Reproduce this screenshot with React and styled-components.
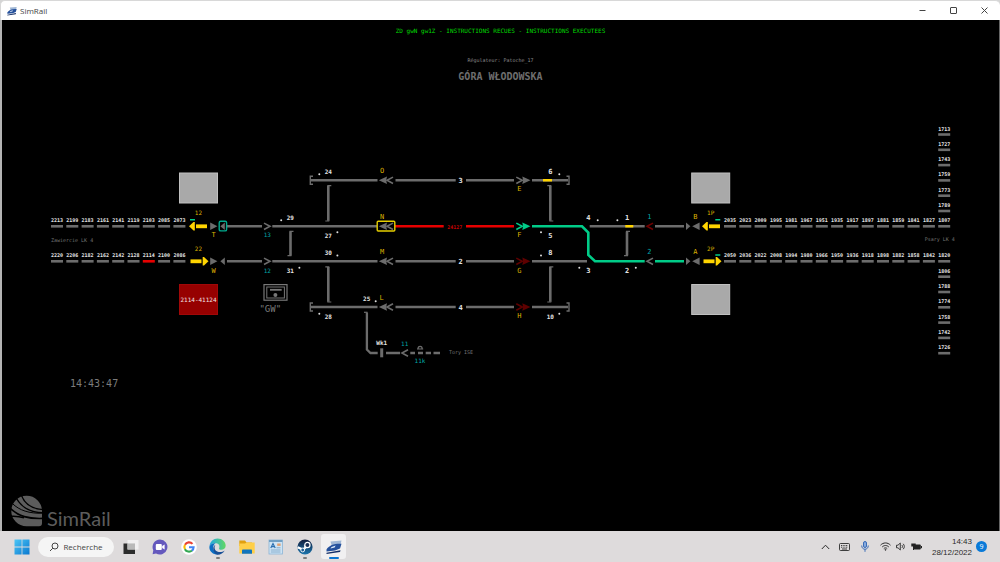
import React from 'react';
import styled, { createGlobalStyle } from 'styled-components';

const Global = createGlobalStyle`
  *{box-sizing:border-box}
  body{margin:0;background:#000;font-family:"Open Sans","Liberation Sans",sans-serif}
`;

const mono = '"DejaVu Sans Mono","Liberation Mono",monospace';
const GREY = '#6c6c6c';
const GREEN = '#00cc88';
const RED = '#e60000';
const DARK_RED = '#5e0000';
const YELLOW = '#ffd400';
const AMBER = '#dcb000';
const TEAL = '#00a8a8';

const Screen = styled.div`
  min-height: 100vh;
  display: flex;
  flex-direction: column;
  background: #d5d5d5;
`;

/* Window frame */
const TitleBar = styled.header`
  height: 20px;
  background: #fff;
  border-top: 1px solid #d8d8d8;
  border-left: 1px solid #d8d8d8;
  border-radius: 5px 5px 0 0;
  display: flex;
  align-items: center;
  padding: 0 0 0 6px;
  gap: 3px;
`;
const AppName = styled.span`
  flex: 1;
  font-size: 8px;
  line-height: 12px;
  color: #444;
`;
const BareButton = styled.button`
  border: 0;
  padding: 0;
  margin: 0;
  background: none;
  font: inherit;
  color: inherit;
  display: flex;
  align-items: center;
  justify-content: center;
`;
const WindowControls = styled.div`
  display: flex;
`;
const WindowButton = styled(BareButton)`
  width: 31px;
  height: 18px;
  color: #444;
`;

/* Dispatcher board */
const Board = styled.main`
  flex: 1;
  background: #000;
  border-left: 2px solid #b4b4b4;
  border-right: 1px solid #666;
  display: flex;
  flex-direction: column;
  font-family: ${mono};
`;
const Message = styled.p`
  margin: 5px 0 0;
  text-align: center;
  color: #00dc00;
  font-size: 6px;
  line-height: 12px;
`;
const Regulator = styled.p`
  margin: 17px 0 0;
  text-align: center;
  color: #8c8c8c;
  font-size: 5px;
  line-height: 12px;
`;
const Station = styled.h1`
  margin: 3px 0 0;
  text-align: center;
  color: #6e6e6e;
  font-size: 10px;
  line-height: 16px;
  font-weight: 700;
`;
const Diagram = styled.svg`
  display: block;
  width: 100%;
  height: auto;
  margin-top: 25px;
`;
const Clock = styled.time`
  margin: 8px 0 0 68px;
  color: #7c7c7c;
  font-size: 10px;
  line-height: 20px;
`;
const Brand = styled.div`
  margin-top: auto;
  padding: 0 0 4px 9px;
  display: flex;
  align-items: flex-end;
  gap: 4px;
  color: #5c5c5c;
`;
const BrandName = styled.span`
  font-family: Lato, sans-serif;
  font-size: 20px;
  line-height: 18px;
`;

/* Diagram parts */
const Label = styled.text`
  font-family: ${mono};
  font-size: ${p => p.$size || 6}px;
  font-weight: ${p => (p.$bold ? 700 : 400)};
  fill: ${p => p.$color || '#e4e4e4'};
  text-anchor: ${p => p.$anchor || 'middle'};
`;
const Rail = styled.path`
  fill: none;
  stroke: ${p => p.$color || GREY};
  stroke-width: ${p => p.$width || 2.6};
`;

/* Taskbar */
const Taskbar = styled.footer`
  height: 31px;
  background: #dedbdc;
  display: flex;
  align-items: center;
  padding: 0 13px 0 9px;
  color: #2b2b2b;
`;
const Pinned = styled.nav`
  display: flex;
  align-items: center;
  gap: 4px;
  flex: 1;
`;
const Search = styled(BareButton)`
  width: 76px;
  height: 20px;
  border-radius: 10px;
  background: #f5f5f5;
  gap: 4px;
  font-size: 8px;
  color: #444;
`;
const Task = styled(BareButton)`
  width: 25px;
  height: 25px;
  position: relative;
  border-radius: 3px;
  background: ${p => (p.$active ? '#f1f0f1' : 'none')};
  &::after {
    content: '';
    display: ${p => (p.$running || p.$active ? 'block' : 'none')};
    position: absolute;
    left: 50%;
    bottom: 0;
    width: ${p => (p.$active ? 10 : 4)}px;
    height: 2px;
    border-radius: 1px;
    transform: translateX(-50%);
    background: ${p => (p.$active ? '#0a74d1' : '#7c7c7c')};
  }
`;
const Tray = styled.div`
  display: flex;
  align-items: center;
`;
const TrayButton = styled(BareButton)`
  width: ${p => p.$w}px;
  height: 20px;
`;
const DateTime = styled.time`
  width: 47px;
  text-align: right;
  font-family: "Liberation Sans", sans-serif;
  font-size: 8px;
  line-height: 11px;
`;
const Badge = styled.span`
  width: 11px;
  height: 11px;
  margin-left: 4px;
  border-radius: 50%;
  background: #0a7ad8;
  color: #fff;
  font-size: 7px;
  line-height: 11px;
  text-align: center;
`;

const ROWS = [180.3, 226.3, 261.3, 307];
const PITCH = 15.3;
const leftTop = [2213, 2199, 2183, 2161, 2141, 2119, 2103, 2085, 2073];
const leftBottom = [2220, 2206, 2182, 2162, 2142, 2128, 2114, 2100, 2086];
const rightTop = [2035, 2023, 2009, 1995, 1981, 1967, 1951, 1935, 1917, 1897, 1881, 1859, 1841, 1827, 1807];
const rightBottom = [2050, 2036, 2022, 2008, 1994, 1980, 1966, 1950, 1936, 1918, 1898, 1882, 1858, 1842, 1820];
const upper = [1713, 1727, 1743, 1759, 1773, 1789];
const lower = [1806, 1788, 1774, 1758, 1742, 1726];

const switches = [
  ['24', 328.3, 173.7], ['6', 550.3, 173.7], ['29', 290.3, 219.5], ['27', 328.3, 237.7],
  ['30', 328.3, 254.7], ['31', 290.3, 272.7], ['5', 550.3, 237.7], ['8', 550.3, 254.7],
  ['4', 588.3, 219.5], ['3', 588.3, 272.7], ['1', 627, 219.5], ['2', 627, 272.7],
  ['28', 328.3, 318.7], ['10', 550.3, 318.7], ['25', 366.7, 300.7], ['Wk1', 381.7, 344.7],
  ['3', 460.7, 183], ['2', 460.7, 264], ['4', 460.7, 310],
];
const amberLabels = [
  ['O', 382, 172.7], ['N', 382, 219], ['M', 382, 254.3], ['L', 381.7, 300.3],
  ['E', 519.3, 191.3], ['F', 519.3, 237.3], ['G', 519.3, 272.5], ['H', 519.3, 318.3],
  ['B', 695.3, 219], ['A', 695.3, 254.3], ['1P', 710.7, 215.3], ['2P', 710.7, 250.7],
  ['12', 198.4, 215], ['22', 198.4, 250.7], ['T', 213.7, 237.3], ['W', 213.7, 272.7],
];
const tealLabels = [
  ['13', 267.3, 237.3], ['12', 267.3, 272.5], ['1', 649.3, 219], ['2', 649.3, 254.3],
  ['11', 404.7, 346], ['11k', 420, 362.7],
];
const dots = [
  [319.3, 174.3], [559.3, 174.3], [281.2, 220.3], [337.4, 232.3], [337.4, 255.4], [299.4, 267.8],
  [541, 232.3], [541, 255.4], [597.7, 220.3], [579.3, 267.8], [617.4, 220.3], [635.8, 267.8],
  [319.3, 313.7], [559.3, 313.7], [375.7, 301.3],
];

function Block({ number, x, y, occupied }) {
  return (
    <g>
      <Label x={x + 6} y={y - 4} $size={5} $bold>{number}</Label>
      <rect x={x} y={y - 1.3} width="12" height="2.6" fill={occupied ? RED : GREY} />
    </g>
  );
}

/* A single character has room for a taller size than a two-digit number. */
function Labels({ items, color }) {
  return items.map(([t, x, y]) => (
    <Label key={`${t}-${x}-${y}`} x={x} y={y} $size={t.length === 1 ? 7 : 6} $color={color} $bold={!color}>{t}</Label>
  ));
}

function Signal({ x, y, dir = 1, color = GREY }) {
  return (
    <g transform={`translate(${x} ${y}) scale(${dir} 1)`}>
      <path d="M-7 -3.2L-1 0L-7 3.2" fill="none" stroke={color} strokeWidth="1.6" />
      <path d="M-1 -3.7L7.2 0L-1 3.7L-0.2 0Z" fill={color} />
    </g>
  );
}

function Chevron({ x, y, dir = 1, color = GREY }) {
  return <Rail d={`M${x - 3 * dir} ${y - 3.2}L${x + 3 * dir} ${y}L${x - 3 * dir} ${y + 3.2}`} $color={color} $width={1.6} />;
}

function Triangle({ x, y, dir = 1, w = 7 }) {
  return <path d={`M${x} ${y - 3.7}L${x + dir * w} ${y}L${x} ${y + 3.7}Z`} fill={GREY} />;
}

function BlockArrow({ x, y, dir = 1 }) {
  return (
    <g transform={`translate(${x} ${y}) scale(${dir} 1)`} fill={YELLOW}>
      <rect x="-9" y="-1.9" width="11" height="3.8" />
      <path d="M3.2 -4.2L4.5 -4.2L9 0L4.5 4.2L3.2 4.2Z" />
    </g>
  );
}

function Link({ x, top, bottom, dir = 1 }) {
  return (
    <g>
      <Rail d={`M${x} ${top + 0.5}V${bottom - 0.5}`} />
      <Rail d={`M${x + 3 * dir} ${top + 0.3}H${x - dir}M${x - 3 * dir} ${bottom - 0.3}H${x + dir}`} $width={1.2} />
    </g>
  );
}

function Describer({ x, y, children }) {
  return (
    <g>
      <rect x={x} y={y} width="38" height="30" fill={children ? '#960000' : '#a9a9a9'} stroke={children ? '#a00808' : '#c0c0c0'} strokeWidth="1" />
      {children && <Label x={x + 19} y={y + 17.5} $size={6} $color="#f2e4e4">{children}</Label>}
    </g>
  );
}

function TrackDiagram() {
  const [r0, r1, r2, r3] = ROWS;
  return (
    <Diagram viewBox="2 110 997 256" role="img" aria-label="Góra Włodowska">
      {leftTop.map((n, i) => <Block key={n} number={n} x={51 + i * PITCH} y={r1} />)}
      {leftBottom.map((n, i) => <Block key={n} number={n} x={51 + i * PITCH} y={r2} occupied={n === 2114} />)}
      {rightTop.map((n, i) => <Block key={n} number={n} x={724 + i * PITCH} y={r1} />)}
      {rightBottom.map((n, i) => <Block key={n} number={n} x={724 + i * PITCH} y={r2} />)}
      {upper.map((n, i) => <Block key={n} number={n} x={938.2} y={134.5 + i * PITCH} />)}
      {lower.map((n, i) => <Block key={n} number={n} x={938.2} y={276.7 + i * PITCH} />)}

      <Describer x={179.5} y={173} />
      <Describer x={179.5} y={284.5}>2114-41124</Describer>
      <Describer x={691.7} y={173} />
      <Describer x={691.7} y={284.5} />

      <Rail d={`M310 ${r0}H377.5M395.5 ${r0}H455.7M466 ${r0}H514M532 ${r0}H568`} />
      <Rail d={`M227 ${r1}H262M272.3 ${r1}H377M589.7 ${r1}H644.7M655 ${r1}H684`} />
      <Rail d={`M227 ${r2}H262M272.3 ${r2}H377.5M395.5 ${r2}H455.7M466 ${r2}H514M532 ${r2}H587`} />
      <Rail d={`M310 ${r3}H377.5M395.5 ${r3}H455.7M466 ${r3}H514M532 ${r3}H568`} />
      <Rail d={`M395 ${r1}H443.7M466 ${r1}H514`} $color={RED} />
      <Rail d={`M532 ${r1}H582L588.3 232.5V255L595 ${r2}H644.7M655 ${r2}H684`} $color={GREEN} />
      <Rail d={`M543 ${r0}H552M625.3 ${r1}H633.3`} $color={YELLOW} />
      {[r0, r3].map(y => (
        <Rail key={y} d={`M313 ${y - 4}H310.3V${y + 4}H313M566.5 ${y - 4}H569V${y + 4}H566.5`} $width={1.4} />
      ))}

      <Link x={328.3} top={185.3} bottom={221.3} />
      <Link x={550.3} top={185.3} bottom={221.3} dir={-1} />
      <Link x={290.5} top={231} bottom={256} />
      <Link x={627} top={231} bottom={256} />
      <Link x={328.3} top={266.5} bottom={302.3} dir={-1} />
      <Link x={550.3} top={266.5} bottom={302.3} />

      <Rail d="M364 312.3H367.5" $width={1.2} />
      <Rail d="M366.9 312.5V349.5L370.5 353H377.7M386 353H400" $width={2.3} />
      <Rail d="M410.3 353H415M418 353H423M425.7 353H431M433.5 353H440" $width={2.3} />
      <Rail d="M381.7 348.3V357.3" $width={3} />
      <Rail d="M417 349H423.2M418 349C418 345.5 422.2 345.5 422.2 349" $width={1.2} />
      <Chevron x={405} y={353} dir={-1} />

      {[r0, r1, r2, r3].map(y => <Signal key={y} x={386} y={y} dir={-1} />)}
      <Signal x={523.3} y={r0} />
      <Signal x={523.3} y={r1} color={GREEN} />
      <Signal x={523.3} y={r2} color={DARK_RED} />
      <Signal x={523.3} y={r3} color={DARK_RED} />
      <rect x="377.2" y="221.2" width="17.6" height="9.8" rx="1" fill="none" stroke="#e6cf00" strokeWidth="1.4" />

      <Chevron x={267} y={r1} />
      <Chevron x={267} y={r2} />
      <Chevron x={650} y={r1} dir={-1} color="#700000" />
      <Chevron x={650} y={r2} dir={-1} />
      {[r1, r2].map(y => (
        <g key={y}>
          <Triangle x={210.2} y={y} w={7.2} />
          <Triangle x={224.8} y={y} dir={-1} w={4.4} />
          <Triangle x={686} y={y} w={4.4} />
          <Triangle x={699.6} y={y} dir={-1} w={7.4} />
        </g>
      ))}
      <rect x="219.2" y="221.3" width="7.4" height="9.6" rx="1.5" fill="none" stroke="#00ab8e" strokeWidth="1.4" />

      <BlockArrow x={198} y={r1} dir={-1} />
      <BlockArrow x={199.5} y={r2} />
      <BlockArrow x={711} y={r1} dir={-1} />
      <BlockArrow x={712.5} y={r2} />
      <Rail d="M190 219.7H195M715.3 219.7H720.3M715.3 255H720.3" $color={GREEN} $width={1.6} />

      {dots.map(([x, y]) => <circle key={`${x}-${y}`} cx={x} cy={y} r="1" fill="#ddd" />)}
      <Labels items={switches} />
      <Labels items={amberLabels} color={AMBER} />
      <Labels items={tealLabels} color={TEAL} />
      <Label x="454.8" y="228.6" $size={5} $color="#c40000" $bold>24127</Label>

      <Label x="51" y="242.3" $size={5} $color="#747474" $anchor="start">Zawiercie LK 4</Label>
      <Label x="924.7" y="241.3" $size={5} $color="#747474" $anchor="start">Psary LK 4</Label>
      <Label x="449" y="354" $size={5} $color="#747474" $anchor="start">Tory ISE</Label>

      <rect x="264" y="284.6" width="23" height="15.6" fill="none" stroke="#777" strokeWidth="1.2" />
      <rect x="266.8" y="287" width="17.6" height="11" fill="none" stroke="#777" strokeWidth="1" />
      <Rail d="M270 289.8H281.7" $color="#777" $width={1.8} />
      <circle cx="275.4" cy="294.9" r="2" fill="#777" />
      <Label x="270.3" y="311.7" $size={9} $color="#7c7c7c">"GW"</Label>
    </Diagram>
  );
}

function TrainIcon({ size }) {
  return (
    <svg width={size} height={size} viewBox="0 0 16 16">
      <path d="M4.5 2.5L15.5 1.5L14.5 6L6 7.5Z" fill="#9fb6d4" />
      <path d="M0.5 10.5C3 6 9 4.4 15.5 4.8L14 9.4L9 11.5L0.5 12.5Z" fill="#24509c" />
      <path d="M5.5 8L9.6 6.6L8.6 8.6L4.5 9.6Z" fill="#dce9f8" />
      <path d="M0.5 13.8L14.5 11.2L14 13L0.5 15Z" fill="#142f68" />
    </svg>
  );
}

const icons = {
  start: (
    <svg width="16" height="16" viewBox="0 0 16 16">
      <defs><linearGradient id="win" x1="0" y1="0" x2="1" y2="1"><stop stopColor="#4cc6f6" /><stop offset="1" stopColor="#0a78cf" /></linearGradient></defs>
      <path d="M0.5 0.5H7.6V7.6H0.5ZM8.4 0.5H15.5V7.6H8.4ZM0.5 8.4H7.6V15.5H0.5ZM8.4 8.4H15.5V15.5H8.4Z" fill="url(#win)" />
    </svg>
  ),
  views: (
    <svg width="16" height="16" viewBox="0 0 16 16">
      <rect x="0.5" y="4.5" width="11.5" height="10.5" fill="#2c2c2c" />
      <rect x="4.5" y="1" width="11" height="9.5" fill="#f2f2f2" fillOpacity="0.92" />
      <rect x="4.5" y="4.5" width="7.5" height="6" fill="#b9b9b9" />
    </svg>
  ),
  chat: (
    <svg width="16" height="16" viewBox="0 0 16 16">
      <path d="M8 0.5A7.5 7.5 0 1 1 4 14.4L0.6 15.3L1.3 11.3A7.5 7.5 0 0 1 8 0.5Z" fill="#6458bd" />
      <rect x="3.8" y="5" width="6" height="6" rx="1" fill="#fff" />
      <path d="M10.2 7L12.6 5.4V10.6L10.2 9Z" fill="#fff" />
    </svg>
  ),
  google: (
    <svg width="16" height="16" viewBox="0 0 16 16">
      <circle cx="8" cy="8" r="7.8" fill="#fff" />
      <g fill="none" strokeWidth="2.1">
        <path d="M11.5 4.9A4.6 4.6 0 0 0 4 5.8" stroke="#ea4335" />
        <path d="M4 5.7A4.6 4.6 0 0 0 4 10.3" stroke="#fbbc05" />
        <path d="M3.9 10.2A4.6 4.6 0 0 0 11 11.5" stroke="#34a853" />
        <path d="M10.9 11.6A4.6 4.6 0 0 0 12.6 8.2H8" stroke="#4285f4" />
      </g>
    </svg>
  ),
  edge: (
    <svg width="17" height="17" viewBox="0 0 16 16">
      <defs>
        <linearGradient id="edgeTop"><stop stopColor="#20a8e4" /><stop offset="1" stopColor="#62d862" /></linearGradient>
      </defs>
      <path d="M0.4 8C1 3 4.2 0.4 8 0.4C12.5 0.4 15.7 3.6 15.7 7.2C15.7 9.8 13.6 11 11.6 11C9.8 11 9 10.3 9.6 9.3C10.5 7 8.8 5 6 5C3.5 5 1.5 6 0.4 8Z" fill="url(#edgeTop)" />
      <path d="M0.4 8C1.5 6 3.5 4.9 6 5C4.5 6 3.6 8 4 10C4.5 13 7.5 14.5 10 14.4C8.5 15.6 7.5 15.6 6.5 15.5C2.5 14.7 0 11.5 0.4 8Z" fill="#0c6fc4" />
      <path d="M6 6.5C4.8 8 5 10.5 6.5 12C9 14 12.5 13.4 14.8 11.8C13.5 14.4 11 15.7 8.2 15.7C5.5 15 4 12.5 4 10C4 8.5 4.8 7 6 6.5Z" fill="#174f96" />
    </svg>
  ),
  folder: (
    <svg width="16" height="16" viewBox="0 0 16 16">
      <path d="M0.3 1.5H6L7.5 3.5H13V7H0.3Z" fill="#e0a010" />
      <path d="M0.3 4.6H6L7.5 3.4H15.7V14.5H0.3Z" fill="#ffcf48" />
      <path d="M3 14.8V11.4Q3 10.6 3.8 10.6H12.2Q13 10.6 13 11.4V14.8Z" fill="#1274bd" />
    </svg>
  ),
  wordpad: (
    <svg width="15" height="16" viewBox="0 0 15 16">
      <rect x="1" y="1" width="13.4" height="14" fill="#cfe4f4" stroke="#8bb5d6" strokeWidth="0.8" />
      <rect x="1" y="1" width="13.4" height="2" fill="#6f9fc4" />
      <path d="M2.8 9L5 4.5L7.2 9M3.6 7.6H6.4" fill="none" stroke="#2d70b0" strokeWidth="1.2" />
      <path d="M2.8 11H12.5M2.8 13H12.5M8.5 8.8H12.5" stroke="#7aa6c8" strokeWidth="0.9" />
      <rect x="9.2" y="4.5" width="3.4" height="2.4" fill="#e0a070" />
    </svg>
  ),
  steam: (
    <svg width="16" height="16" viewBox="0 0 16 16">
      <defs><linearGradient id="steamBg" x1="0" y1="0" x2="0" y2="1"><stop stopColor="#131d3c" /><stop offset="1" stopColor="#1a76ae" /></linearGradient></defs>
      <circle cx="8" cy="8" r="7.6" fill="url(#steamBg)" />
      <path d="M0.6 8.3L6 10.6L9 8L7.7 6.2" fill="none" stroke="#fff" strokeWidth="2.2" />
      <circle cx="10.4" cy="6" r="2.6" fill="#1b3157" stroke="#fff" strokeWidth="1.2" />
      <circle cx="5.7" cy="11" r="1.9" fill="#1a5d95" stroke="#fff" strokeWidth="0.9" />
    </svg>
  ),
};

/* Globe with a flat right side, crossed by rails that curve down to the right. */
function Logo() {
  return (
    <svg width="32" height="32" viewBox="0 0 32 32">
      <path d="M15.5 0.8A15.3 15.3 0 0 1 31 16.1V28.2Q31 31.2 28 31.2H15.5A15.2 15.2 0 0 1 15.5 0.8Z" fill="#5c5c5c" />
      <g fill="none" stroke="#000">
        <path d="M10.5 0.5C13.5 8.5 21 14 32 14.6" strokeWidth="1.4" />
        <path d="M5.5 3.5C10.5 12 19 17.6 32 17.6" strokeWidth="1.4" />
        <path d="M1.2 8.4C8.5 15.4 18 18.7 32 18.2" strokeWidth="1" />
        <path d="M-0.5 13.6C8 21.3 17 24 32 23.4" strokeWidth="1.7" />
        <path d="M0 21.2C6 20.9 9 21.4 13 22.8" strokeWidth="1.5" />
      </g>
    </svg>
  );
}

const tasks = [
  ['Bureaux', 'views'], ['Conversation', 'chat'], ['Google', 'google'], ['Edge', 'edge', true],
  ['Explorateur', 'folder'], ['WordPad', 'wordpad'], ['Steam', 'steam', true],
];

const line = { fill: 'none', stroke: 'currentColor', strokeWidth: 1 };

export default function App() {
  return (
    <>
      <Global />
      <Screen>
        <TitleBar>
          <TrainIcon size={10} />
          <AppName>SimRail</AppName>
          <WindowControls>
            <WindowButton aria-label="Réduire"><svg width="7" height="7" {...line}><path d="M0.5 3.5H6.5" /></svg></WindowButton>
            <WindowButton aria-label="Agrandir"><svg width="7" height="7" {...line}><rect x="0.5" y="0.5" width="6" height="6" rx="0.5" /></svg></WindowButton>
            <WindowButton aria-label="Fermer"><svg width="7" height="7" {...line}><path d="M0.5 0.5L6.5 6.5M6.5 0.5L0.5 6.5" /></svg></WindowButton>
          </WindowControls>
        </TitleBar>
        <Board>
          <Message>ZD gwN gw1Z - INSTRUCTIONS RECUES - INSTRUCTIONS EXECUTEES</Message>
          <Regulator>Régulateur: Patoche_17</Regulator>
          <Station>GÓRA WŁODOWSKA</Station>
          <TrackDiagram />
          <Clock>14:43:47</Clock>
          <Brand><Logo /><BrandName>SimRail</BrandName></Brand>
        </Board>
        <Taskbar>
          <Pinned>
            <Task aria-label="Démarrer">{icons.start}</Task>
            <Search>
              <svg width="10" height="10" viewBox="0 0 10 10" {...line}><circle cx="6" cy="4" r="3" /><path d="M3.8 6.2L1 9" /></svg>
              Recherche
            </Search>
            {tasks.map(([name, icon, running]) => <Task key={name} aria-label={name} $running={running}>{icons[icon]}</Task>)}
            <Task aria-label="SimRail" $active><TrainIcon size={16} /></Task>
          </Pinned>
          <Tray>
            <TrayButton $w={18} aria-label="Icônes cachées"><svg width="9" height="6" {...line}><path d="M0.8 5L4.5 1.2L8.2 5" /></svg></TrayButton>
            <TrayButton $w={20} aria-label="Clavier">
              <svg width="11" height="8" viewBox="0 0 11 8" {...line} strokeWidth="0.9"><rect x="0.5" y="0.5" width="10" height="7" rx="1" /><path d="M2 2.5H9M2 4.2H9" strokeDasharray="1 0.7" /><path d="M3 6H8" /></svg>
            </TrayButton>
            <TrayButton $w={21} aria-label="Micro">
              <svg width="8" height="11" viewBox="0 0 8 11" fill="none" stroke="#2b62b4" strokeWidth="0.9"><rect x="2.5" y="0.5" width="3" height="6" rx="1.5" fill="#86a9dc" /><path d="M0.7 4.5C0.7 9.5 7.3 9.5 7.3 4.5M4 8.3V10.8" /></svg>
            </TrayButton>
            <TrayButton $w={20} aria-label="Réseau">
              <svg width="11" height="9" viewBox="0 0 11 9" {...line}><path d="M0.5 3.2C3.3 0.2 7.7 0.2 10.5 3.2M2.2 5C4 3 7 3 8.8 5M3.8 6.6C4.8 5.6 6.2 5.6 7.2 6.6" /><circle cx="5.5" cy="7.8" r="0.5" /></svg>
            </TrayButton>
            <TrayButton $w={12} aria-label="Son">
              <svg width="10" height="9" viewBox="0 0 10 9" {...line} strokeWidth="0.9"><path d="M0.5 3.2H2L4.3 1V8L2 5.8H0.5ZM5.8 3C6.7 4 6.7 5 5.8 6M7.2 1.8C8.7 3.4 8.7 5.6 7.2 7.2" /></svg>
            </TrayButton>
            <TrayButton $w={18} aria-label="Batterie">
              <svg width="11" height="9" viewBox="0 0 11 9" fill="#222"><rect x="2.5" y="2.6" width="7.3" height="5" rx="1" /><rect x="10" y="4" width="1" height="2.2" /><path d="M0.3 1.5H4.7V4.5H3V8H2V4.5H0.3Z" /></svg>
            </TrayButton>
            <DateTime>14:43<br />28/12/2022</DateTime>
            <Badge>9</Badge>
          </Tray>
        </Taskbar>
      </Screen>
    </>
  );
}
